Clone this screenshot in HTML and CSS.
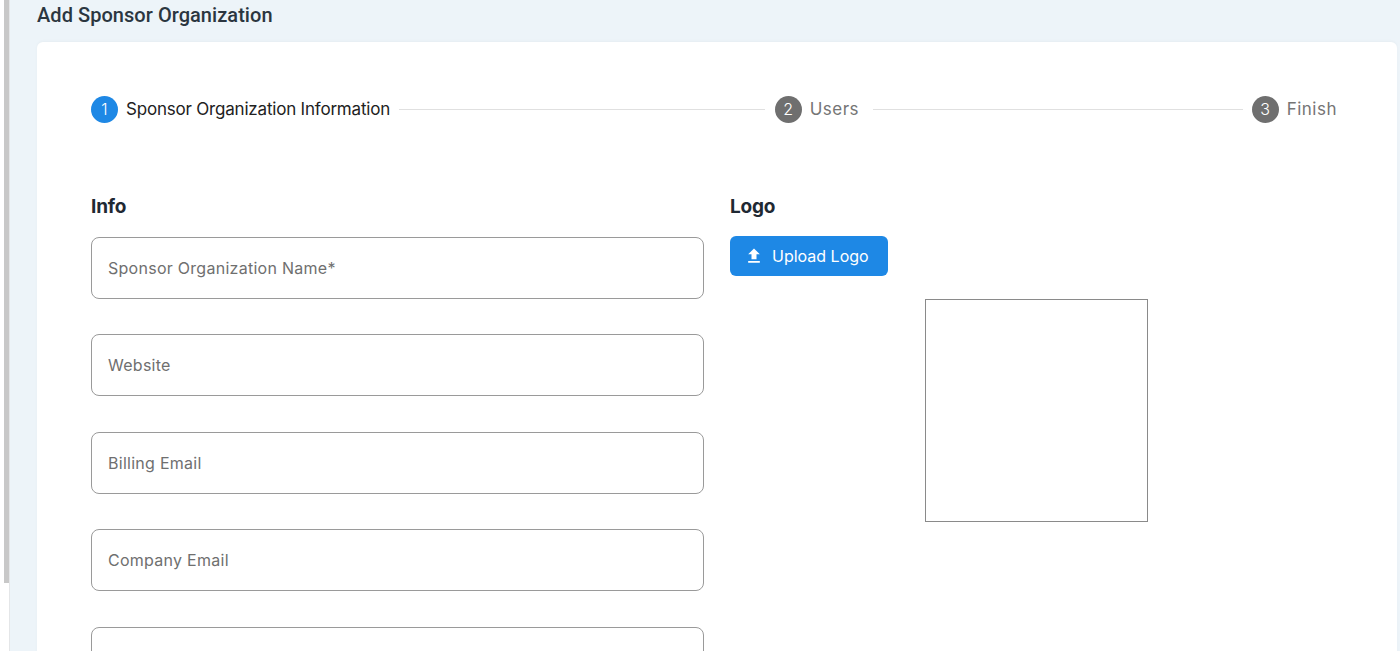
FILE: index.html
```html
<!DOCTYPE html>
<html lang="en">
<head>
<meta charset="utf-8">
<title>Add Sponsor Organization</title>
<link rel="stylesheet" href="styles.css">
</head>
<body>
<div class="shell">
  <div class="rail"><div class="rail-thumb"></div></div>
  <main class="content">
    <h1 class="page-title">Add Sponsor Organization</h1>
    <section class="card">
      <ol class="stepper">
        <li class="step active"><span class="step-num">1</span><span class="step-label">Sponsor Organization Information</span></li>
        <li class="step-line line-a"></li>
        <li class="step"><span class="step-num">2</span><span class="step-label">Users</span></li>
        <li class="step-line line-b"></li>
        <li class="step"><span class="step-num">3</span><span class="step-label">Finish</span></li>
      </ol>
      <div class="form-grid">
        <div class="info-col">
          <h2 class="section-title">Info</h2>
          <div class="field"><span class="placeholder">Sponsor Organization Name*</span></div>
          <div class="field"><span class="placeholder">Website</span></div>
          <div class="field"><span class="placeholder">Billing Email</span></div>
          <div class="field"><span class="placeholder">Company Email</span></div>
          <div class="field"></div>
        </div>
        <div class="logo-col">
          <h2 class="section-title">Logo</h2>
          <button class="upload-btn" type="button">
            <svg class="upload-icon" viewBox="0 0 24 24" width="20" height="20" aria-hidden="true"><path fill="currentColor" d="M9 16h6v-6h4l-7-7-7 7h4v6zm-4 2h14v2H5v-2z"/></svg>
            <span>Upload Logo</span>
          </button>
          <div class="logo-box"></div>
        </div>
      </div>
    </section>
  </main>
</div>
</body>
</html>
```
FILE: styles.css
```css
* { box-sizing: border-box; }
html, body { margin: 0; height: 100%; overflow: hidden; background: #fff; }
body { font-family: "Inter", "Liberation Sans", sans-serif; }
.shell { display: flex; height: 651px; overflow: hidden; }
.rail { width: 10px; flex: none; background: #fff; border-right: 1px solid #e4e6e8; }
.rail-thumb { width: 5px; height: 583px; margin-left: 4px; background: #c8c8c8; }
.content { flex: 1; min-width: 0; background: #edf4f9; padding: 0 3px 0 27px; }
.page-title { margin: 0; height: 42px; padding-top: 3px; font: 500 20px/25px Roboto, sans-serif; letter-spacing: .05px; color: #2b3640; }
.card { background: #fff; border-radius: 6px; height: 700px; padding: 53px 60px 0 54px; box-shadow: 0 -1px 3px rgba(0,0,0,.03); }
.stepper { list-style: none; margin: 0; padding: 0; display: flex; align-items: center; height: 28px; }
.step { display: flex; align-items: center; gap: 8px; flex: none; }
.step-num { width: 27px; height: 27px; border-radius: 50%; background: #6f6f6f; color: #fff; font-size: 16px; display: flex; align-items: center; justify-content: center; font-weight: 300; }
.active .step-num { background: #1e88e5; }
.step-label { font-size: 17px; color: #757575; letter-spacing: .5px; }
.active .step-label { color: #212121; letter-spacing: -.2px; }
.step-line { height: 1px; background: #e0e0e0; flex-basis: 0; }
.line-a { flex-grow: 366; margin: 1px 10px 0 9px; }
.line-b { flex-grow: 370; margin: 1px 9px 0 14px; }
.form-grid { display: flex; gap: 26px; padding-top: 69px; }
.info-col { width: 613px; flex: none; }
.section-title { margin: 0 0 14.6px; font-size: 19px; line-height: 30px; font-weight: 700; letter-spacing: -.2px; color: #1f2933; }
.field { height: 62px; border: 1px solid #9a9a9a; border-radius: 8px; margin-bottom: 35.5px; display: flex; align-items: center; padding: 0 16px; background: #fff; }
.placeholder { font-size: 16px; color: #6f6f6f; letter-spacing: .27px; }
.logo-col { flex: 1; }
.logo-col .section-title { margin-bottom: 14px; }
.upload-btn { display: flex; align-items: center; gap: 8px; width: 158px; height: 40px; padding: 0 0 0 14px; border: 0; border-radius: 6px; background: #1e88e5; color: #fff; font: 400 16px "Inter", sans-serif; }
.upload-icon { flex: none; }
.logo-box { width: 223px; height: 223px; margin: 23px 0 0 195px; border: 1px solid #8a8a8a; }
```
